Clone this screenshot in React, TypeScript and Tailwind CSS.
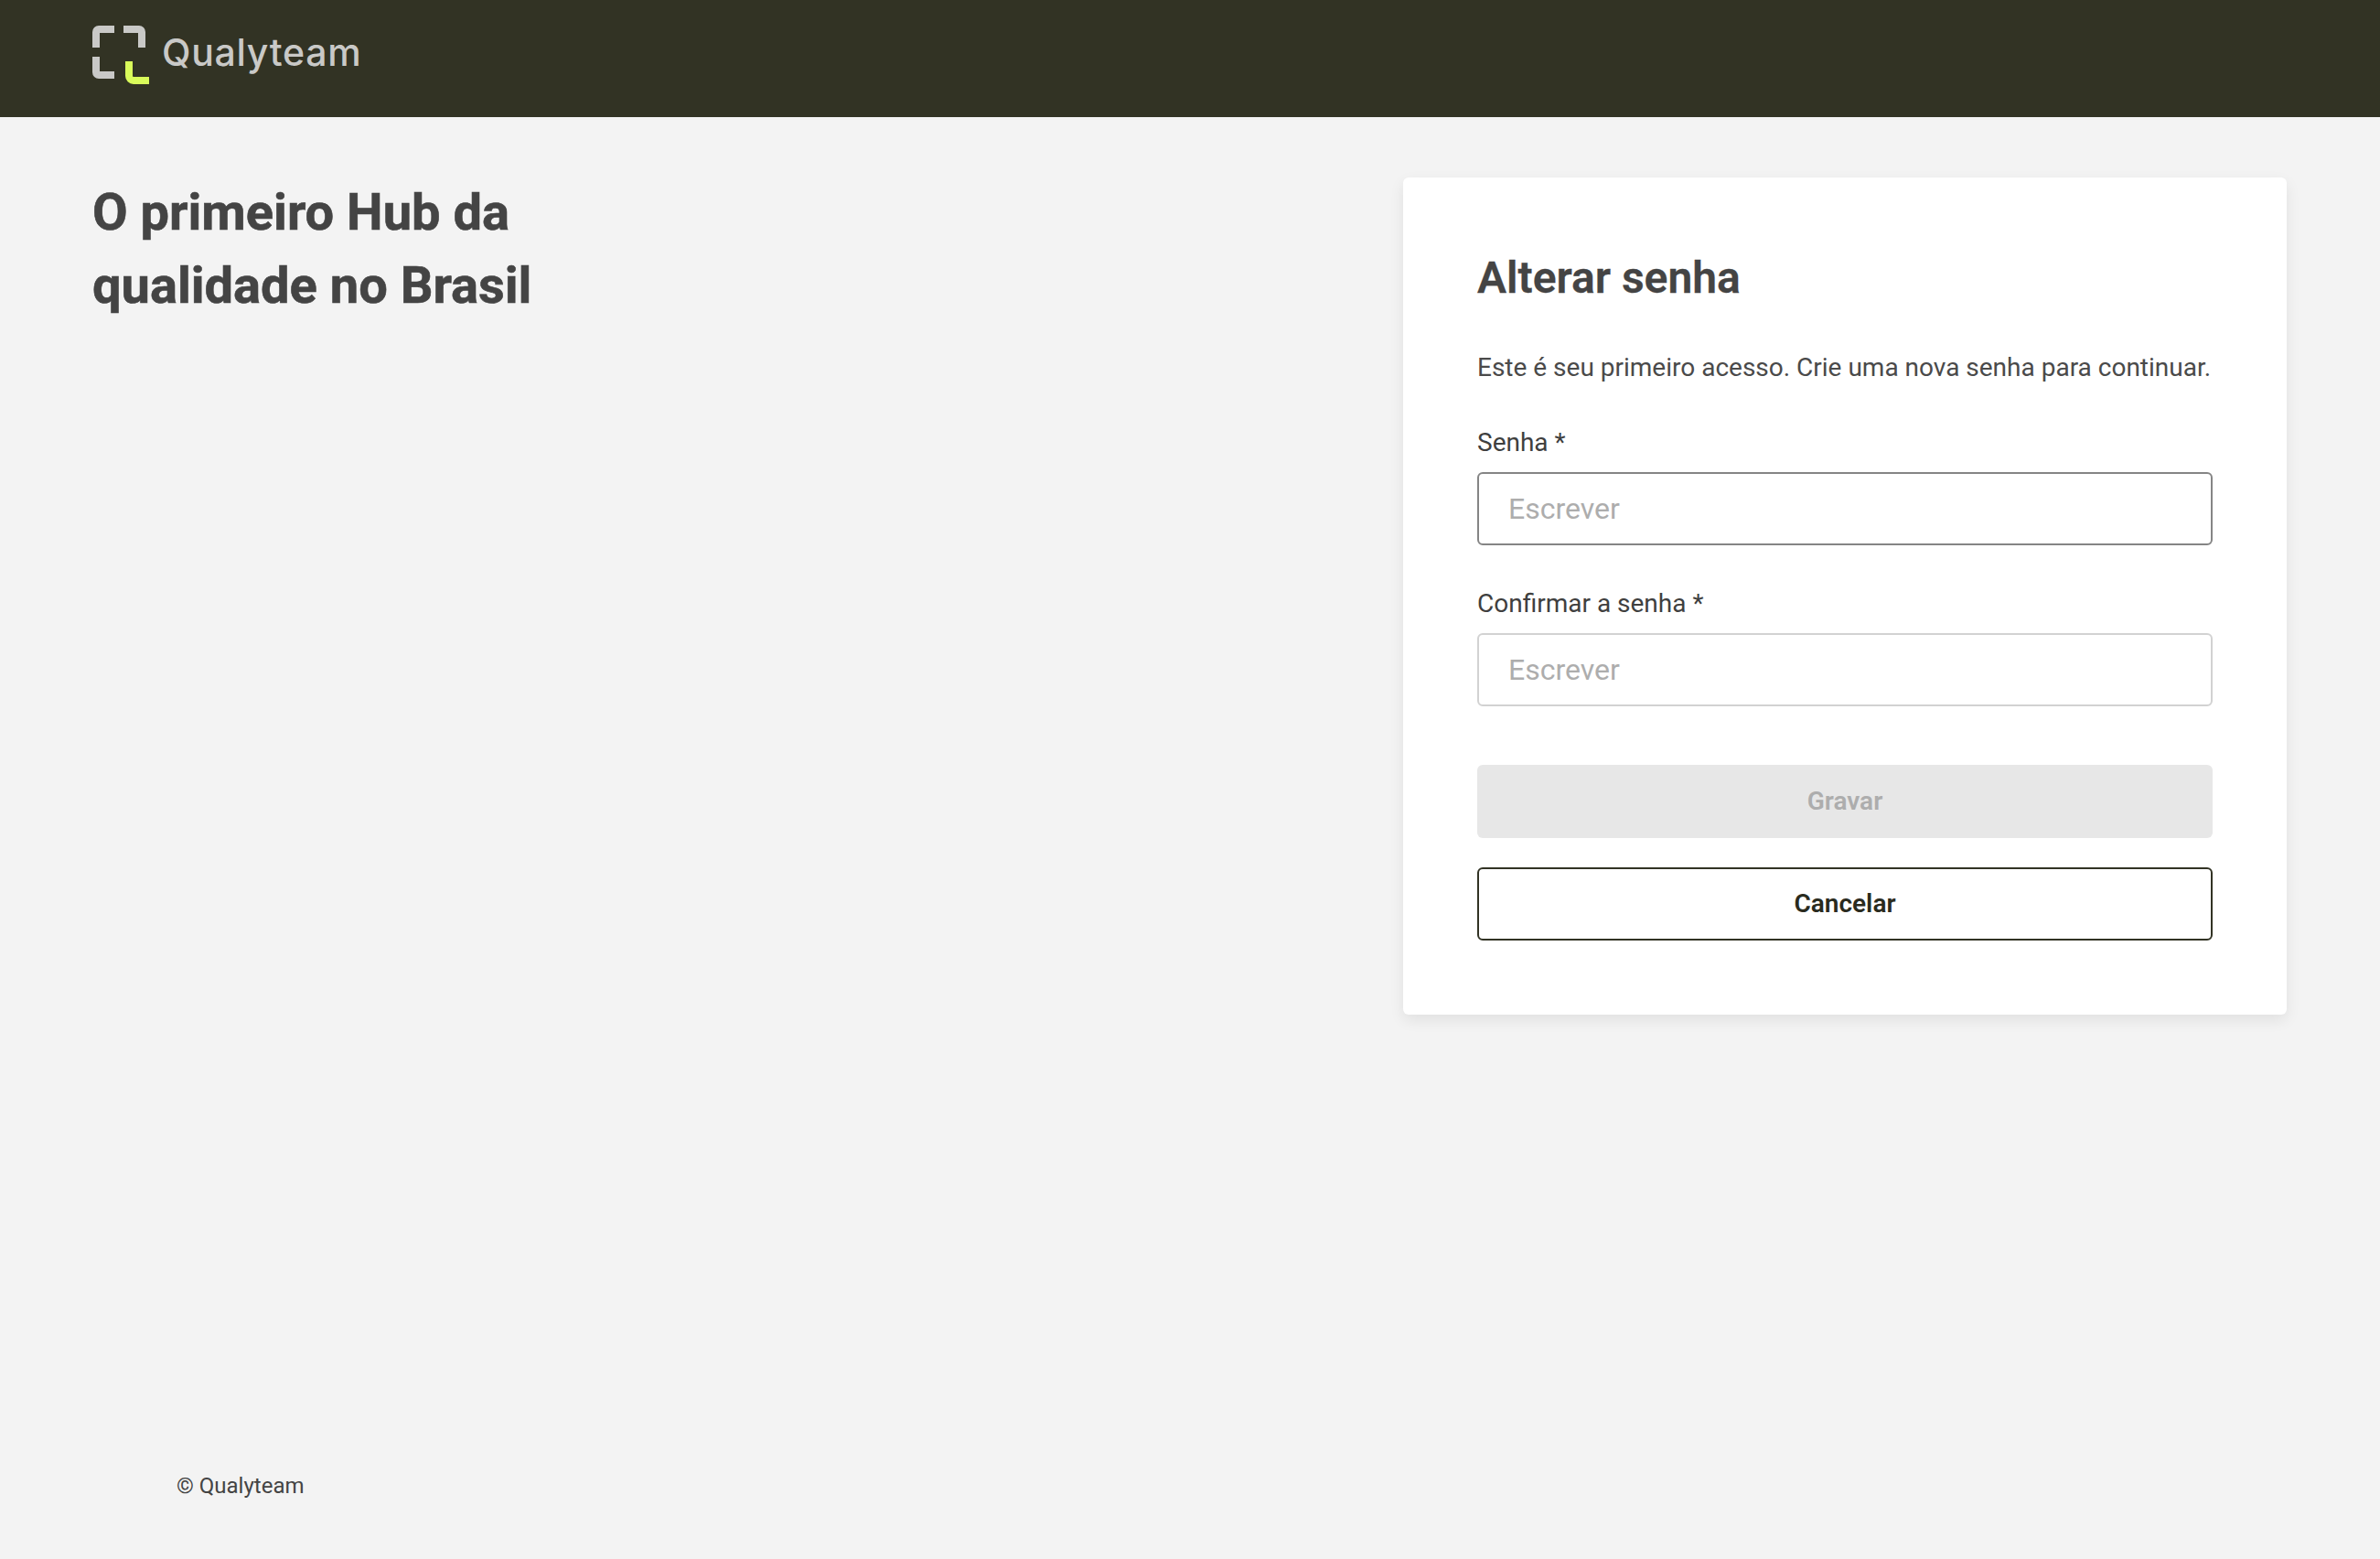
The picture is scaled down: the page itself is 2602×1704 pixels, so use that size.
function Logo() {
    return (
        <div className="flex items-center gap-[14px]">
            <svg width="62" height="64" viewBox="0 0 62 64" fill="none">
                <path d="M24 4H7a3 3 0 0 0-3 3v17" stroke="#c9c9c7" strokeWidth="8" />
                <path d="M34 4h17a3 3 0 0 1 3 3v17" stroke="#c9c9c7" strokeWidth="8" />
                <path d="M4 34v17a3 3 0 0 0 3 3h17" stroke="#c9c9c7" strokeWidth="8" />
                <path d="M40 39v16a5 5 0 0 0 5 5h17" stroke="#d9fb5a" strokeWidth="8" />
            </svg>
            <span className="font-['Inter',sans-serif] font-medium text-[41px] leading-none tracking-[0.7px] text-[#c9c9c7] mb-[6px]">Qualyteam</span>
        </div>
    );
}

function Field({ label, active }: { label: string; active?: boolean }) {
    return (
        <label className="block">
            <span className="block text-[28px] leading-[40px] text-[#3f3f3f] mb-[12px]">{label}</span>
            <input
                placeholder="Escrever"
                className={`block w-full h-[80px] px-[32px] rounded-[6px] bg-white border-2 text-[32px] outline-none placeholder:text-[#adadad] ${active ? "border-[#858585]" : "border-[#d2d2d2]"}`}
            />
        </label>
    );
}

export default function App() {
    return (
        <div className="min-h-screen flex flex-col bg-[#f3f3f3] font-['Roboto',sans-serif]">
            <header className="h-[128px] bg-[#323324] flex items-center px-[101px] pb-[8px]">
                <Logo />
            </header>

            <main className="flex-1 flex justify-between items-start pl-[101px] pr-[102px] pt-[66px]">
                <h1 className="w-[600px] text-[56px] leading-[80px] font-bold text-[#444444] mt-[-2px] [-webkit-text-stroke:0.6px_#444444]">
                    O primeiro Hub da qualidade no Brasil
                </h1>

                <section className="w-[966px] h-[915px] bg-white rounded-[6px] shadow-[0_6px_16px_rgba(0,0,0,0.08)] px-[81px] pt-[78px]">
                    <h2 className="text-[48px] leading-[64px] font-semibold text-[#444444] [-webkit-text-stroke:0.3px_#444444]">Alterar senha</h2>
                    <p className="mt-[46px] text-[28px] leading-[40px] text-[#4a4a4a] whitespace-nowrap">
                        Este é seu primeiro acesso. Crie uma nova senha para continuar.
                    </p>
                    <div className="mt-[42px] flex flex-col gap-[44px]">
                        <Field label="Senha *" active />
                        <Field label="Confirmar a senha *" />
                    </div>
                    <div className="mt-[64px] flex flex-col gap-[32px]">
                        <button className="h-[80px] rounded-[6px] bg-[#e7e7e7] text-[28px] font-semibold text-[#adadad]">Gravar</button>
                        <button className="h-[80px] rounded-[6px] bg-white border-2 border-[#323324] text-[28px] font-semibold text-[#2a2b1e]">Cancelar</button>
                    </div>
                </section>
            </main>

            <footer className="pl-[193px] pb-[64px] text-[24px] leading-[32px] text-[#444444]">© Qualyteam</footer>
        </div>
    );
}
